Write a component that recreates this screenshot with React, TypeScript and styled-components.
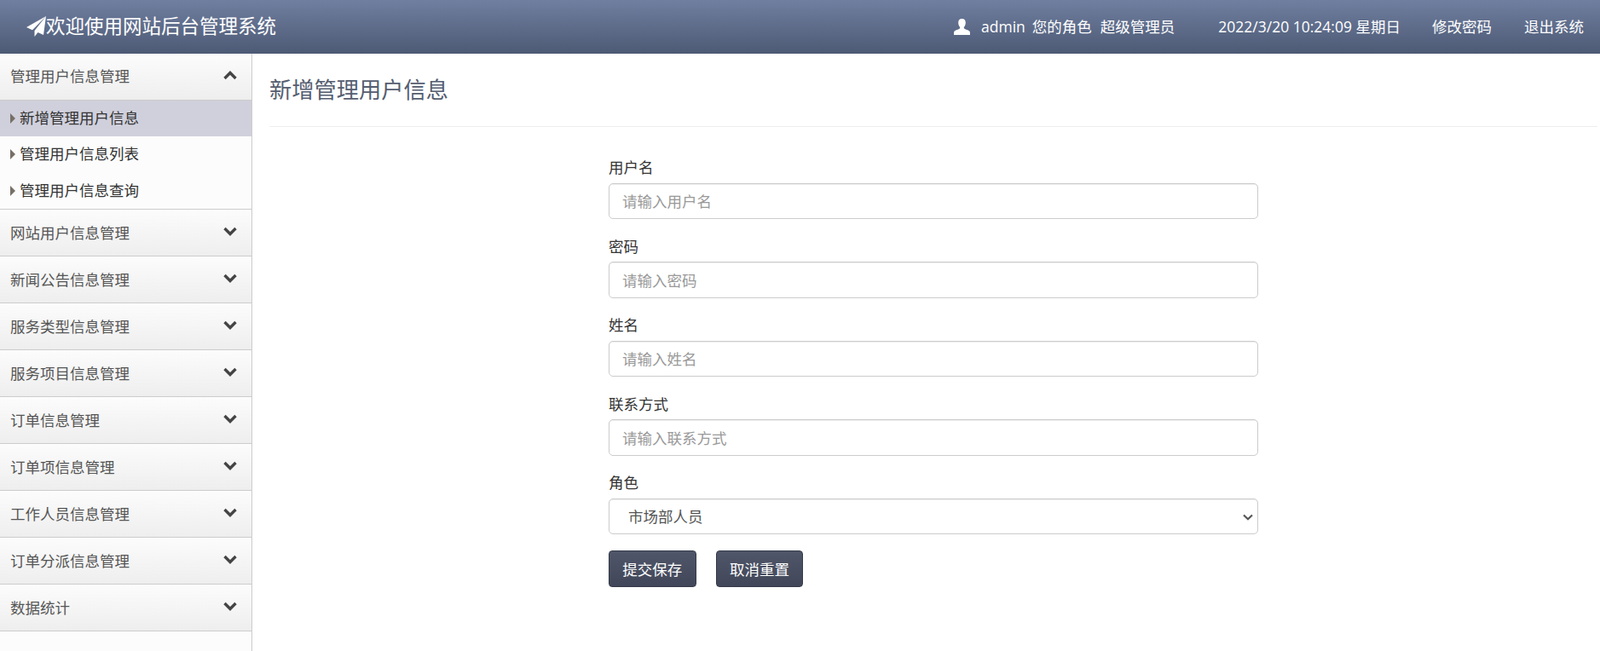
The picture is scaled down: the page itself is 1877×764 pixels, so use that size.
import React from "react";
import styled, { createGlobalStyle } from "styled-components";

const Global = createGlobalStyle`
  html, body { margin: 0; padding: 0; background: #fff; }
  body { font-family: "Open Sans", "Noto Sans CJK SC", sans-serif; font-size: 17.5px; color: #333; }
  * { box-sizing: border-box; }
`;

const Page = styled.div`
  width: 1877px;
  height: 764px;
  display: flex;
  flex-direction: column;
  overflow: hidden;
`;

const TopBar = styled.header`
  height: 63px;
  flex: none;
  display: flex;
  align-items: center;
  padding: 0 19px 1px 31px;
  color: #fff;
  background: linear-gradient(to bottom, #707fa0, #4d5a75);
`;

const Brand = styled.div`
  display: flex;
  align-items: center;
  font-size: 22.5px;
  line-height: 28px;
`;

const TopRight = styled.div`
  margin-left: auto;
  display: flex;
  align-items: center;
  font-size: 17.5px;
  line-height: 25px;
`;

const TopText = styled.span<{ $ml?: number }>`
  margin-left: ${(p) => p.$ml ?? 0}px;
  white-space: nowrap;
`;

const Body = styled.div`
  flex: 1;
  display: flex;
  min-height: 0;
`;

const Sidebar = styled.nav`
  width: 296px;
  flex: none;
  background: #fcfcfc;
  border-right: 1px solid #ccc;
`;

const MenuHeader = styled.div<{ $open?: boolean }>`
  height: 55px;
  display: flex;
  align-items: center;
  justify-content: space-between;
  padding: ${(p) => (p.$open ? "0 17px 1px 12px" : "1px 17px 0 12px")};
  border-bottom: 1px solid #ccc;
  color: #555;
  line-height: 25px;
  background: linear-gradient(to bottom, #fcfcfc, #eeeeee);
`;

const SubList = styled.div`
  border-bottom: 1px solid #ccc;
`;

const SubItem = styled.div<{ $active?: boolean }>`
  height: 42.33px;
  display: flex;
  align-items: center;
  padding: 0 0 3px 12px;
  color: #333;
  background: ${(p) => (p.$active ? "#d0d0dc" : "transparent")};
  &::before {
    content: "";
    width: 0;
    height: 0;
    margin: 3px 5px 0 0;
    border-left: 6.5px solid #776f66;
    border-top: 6px solid transparent;
    border-bottom: 6px solid transparent;
  }
`;

const Main = styled.main`
  flex: 1;
  padding: 0 3px 0 20px;
`;

const PageTitle = styled.h3`
  margin: 0;
  height: 86px;
  padding-top: 24px;
  font-size: 26.25px;
  line-height: 36px;
  font-weight: 400;
  color: #545d70;
  border-bottom: 1px solid #eee;
`;

const Form = styled.form`
  width: 762px;
  margin: 34.25px auto 0;
`;

const Field = styled.div`
  margin-bottom: 18.75px;
`;

const Label = styled.label`
  display: block;
  margin-bottom: 5.25px;
  padding-top: 1px;
  font-size: 17.5px;
  line-height: 25px;
  color: #333;
`;

const Input = styled.input`
  display: block;
  width: 100%;
  height: 42.5px;
  padding: 1px 15px 0;
  font: inherit;
  color: #555;
  background: #fff;
  border: 1px solid #ccc;
  border-radius: 5px;
  box-shadow: inset 0 1px 1px rgba(0, 0, 0, 0.075);
  &::placeholder { color: #999; opacity: 1; }
`;

const SelectWrap = styled.div`
  position: relative;
`;

const Select = styled.select`
  display: block;
  width: 100%;
  height: 42.5px;
  padding: 0 30px 0 22px;
  font: inherit;
  color: #555;
  background: #fff;
  border: 1px solid #ccc;
  border-radius: 5px;
  box-shadow: inset 0 1px 1px rgba(0, 0, 0, 0.075);
  appearance: none;
`;

const SelectArrow = styled.svg`
  position: absolute;
  right: 6px;
  top: 18px;
  width: 12px;
  height: 8px;
  pointer-events: none;
`;

const Actions = styled.div`
  display: flex;
  gap: 23.25px;
`;

const Button = styled.button`
  height: 43px;
  width: 102.5px;
  padding: 0;
  font: inherit;
  color: #fff;
  border: 1px solid #343a48;
  border-radius: 4px;
  background: linear-gradient(to bottom, #505669, #414759);
`;

const PlaneIcon = () => (
  <svg width="23" height="24" viewBox="0 0 23 24" style={{ flex: "none", marginTop: -1 }}>
    <path fill="#fff" d="M23 0 0 13l7 3.200zM23 0 9.500 17v7l4-5 6.500 3z" />
  </svg>
);

const UserIcon = () => (
  <svg width="19" height="19" viewBox="0 0 19 19" style={{ flex: "none" }}>
    <path
      fill="#fff"
      d="M9.500 0c3 0 4.300 2 4.300 4.700 0 2.200-1 4-1.900 5.100-.3 1 0 1.700 1 2.200 2 1 4.700 1.400 5.800 3 .2.900.3 2.400.3 4H0c0-1.600.1-3.100.3-4 1.100-1.600 3.800-2 5.800-3 1-.5 1.300-1.200 1-2.200-.9-1.100-1.900-2.900-1.900-5.100C5.200 2 6.500 0 9.500 0z"
    />
  </svg>
);

const Chevron = ({ up }: { up?: boolean }) => (
  <svg width="16" height="11" viewBox="0 0 16 11" style={{ flex: "none", marginTop: -3 }}>
    <path
      fill="none"
      stroke="#444"
      strokeWidth="3.4"
      d={up ? "M1.500 9 8 2.500 14.500 9" : "M1.500 2 8 8.500 14.500 2"}
    />
  </svg>
);

const menus = [
  "网站用户信息管理",
  "新闻公告信息管理",
  "服务类型信息管理",
  "服务项目信息管理",
  "订单信息管理",
  "订单项信息管理",
  "工作人员信息管理",
  "订单分派信息管理",
  "数据统计",
];

const fields = [
  { label: "用户名", ph: "请输入用户名", type: "text" },
  { label: "密码", ph: "请输入密码", type: "password" },
  { label: "姓名", ph: "请输入姓名", type: "text" },
  { label: "联系方式", ph: "请输入联系方式", type: "text" },
];

export default function App() {
  return (
    <Page>
      <Global />
      <TopBar>
        <Brand>
          <PlaneIcon />
          欢迎使用网站后台管理系统
        </Brand>
        <TopRight>
          <UserIcon />
          <TopText $ml={13}>admin</TopText>
          <TopText $ml={8}>您的角色</TopText>
          <TopText $ml={10}>超级管理员</TopText>
          <TopText $ml={51}>2022/3/20 10:24:09 星期日</TopText>
          <TopText $ml={37}>修改密码</TopText>
          <TopText $ml={38}>退出系统</TopText>
        </TopRight>
      </TopBar>
      <Body>
        <Sidebar>
          <MenuHeader $open>
            管理用户信息管理
            <Chevron up />
          </MenuHeader>
          <SubList>
            <SubItem $active>新增管理用户信息</SubItem>
            <SubItem>管理用户信息列表</SubItem>
            <SubItem>管理用户信息查询</SubItem>
          </SubList>
          {menus.map((m) => (
            <MenuHeader key={m}>
              {m}
              <Chevron />
            </MenuHeader>
          ))}
        </Sidebar>
        <Main>
          <PageTitle>新增管理用户信息</PageTitle>
          <Form onSubmit={(e) => e.preventDefault()}>
            {fields.map((f) => (
              <Field key={f.label}>
                <Label>{f.label}</Label>
                <Input type={f.type} placeholder={f.ph} />
              </Field>
            ))}
            <Field>
              <Label>角色</Label>
              <SelectWrap>
                <Select defaultValue="市场部人员">
                  <option>市场部人员</option>
                </Select>
                <SelectArrow viewBox="0 0 12 8">
                  <path fill="none" stroke="#555" strokeWidth="2.200" d="M1 1.500 6 6.200 11 1.500" />
                </SelectArrow>
              </SelectWrap>
            </Field>
            <Actions>
              <Button type="submit">提交保存</Button>
              <Button type="reset">取消重置</Button>
            </Actions>
          </Form>
        </Main>
      </Body>
    </Page>
  );
}
